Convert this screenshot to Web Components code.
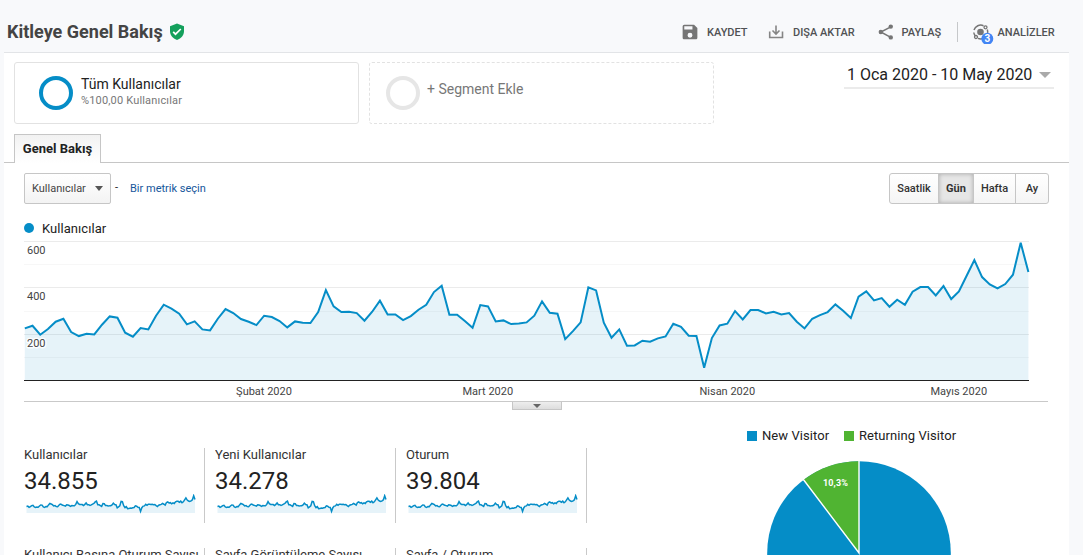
<!DOCTYPE html>
<html lang="tr">
<head>
<meta charset="utf-8">
<title>Kitleye Genel Bakış</title>
<style>
html,body{margin:0;height:100%;overflow:hidden;background:#f8f9fb;font-family:Roboto,"Liberation Sans",sans-serif;color:#222}
</style>
</head>
<body>
<audience-page></audience-page>
<script>
const define = (name, html, init) => customElements.define(name, class extends HTMLElement {
  constructor() {
    super();
    const t = document.createElement('template');
    t.innerHTML = html;
    this.attachShadow({mode: 'open'}).appendChild(t.content.cloneNode(true));
  }
  connectedCallback() { if (init) init(this, this.shadowRoot); }
});

/* Daily users, as height in thirds of a pixel from the top of the plot frame */
const DAYS = [339,331,358,341,319,310,350,362,355,357,328,303,307,352,364,338,342,301,268,280,295,327,318,342,345,310,281,293,311,319,329,
301,305,317,336,318,322,323,290,224,273,290,289,293,316,289,256,297,297,314,302,283,268,230,211,298,298,317,337,269,
273,318,315,326,324,321,301,258,292,295,371,347,321,216,225,322,367,342,391,390,376,379,369,363,325,334,361,362,457,368,330,
325,287,312,284,284,294,289,297,293,319,339,310,299,290,267,286,308,244,228,255,248,274,253,268,229,215,215,240,212,251,
228,181,134,185,207,219,206,178,82,170];

define('tool-action', `<style>
:host{display:flex;align-items:center;height:24px;font-size:11px;font-weight:500;color:#505153;white-space:nowrap}
::slotted(svg){display:block;flex:none}
.t{margin-left:var(--gap,8px)}
</style><slot name="icon"></slot><span class="t"><slot></slot></span>`);

define('page-header', `<style>
:host{display:flex;height:52px;box-sizing:border-box;padding:12px 0 0 7px;position:relative}
h1{margin:0;font-size:18px;line-height:39px;font-weight:700;color:#444;width:155px;white-space:nowrap}
.shield{margin:11px 0 0 8px;display:block}
.tools{display:flex;margin-left:auto;padding-top:8px;width:402px}
tool-action:nth-of-type(1){width:87px;--gap:7px}
tool-action:nth-of-type(2){width:109.500px}
tool-action:nth-of-type(3){width:79.500px;--gap:8px}
.sep{width:1px;height:20px;margin-top:2px;background:#c6c8ca}
tool-action:last-child{margin-left:13.500px;--gap:4px}
</style>
<h1>Kitleye Genel Bakış</h1>
<svg class="shield" width="14" height="18" viewBox="0 0 14 18"><path d="M7 .5 14 3.200V8c0 4.200-2.700 7.500-7 9C2.700 15.500 0 12.200 0 8V3.200z" fill="#14a05c"/><path d="m3.200 8.800 2.300 2.400 5.300-5.200" fill="none" stroke="#fff" stroke-width="1.700"/></svg>
<div class="tools">
<tool-action><svg slot="icon" width="18" height="18" viewBox="1 1 22 22" style="margin-right:1px"><path fill="#757575" d="M17 3H5a2 2 0 0 0-2 2v14c0 1.100.9 2 2 2h14c1.100 0 2-.9 2-2V7l-4-4zm-5 16a3 3 0 1 1 0-6 3 3 0 0 1 0 6zm3-10H5V5h10v4z"/></svg>KAYDET</tool-action>
<tool-action><svg slot="icon" width="16" height="16" viewBox="0 0 16 16" style="margin-right:1px"><path d="M1.700 7.500v6h12.800v-6M8 1.500v8M4.500 6.500 8 10l3.500-3.500" fill="none" stroke="#858585" stroke-width="1.600"/></svg>DIŞA AKTAR</tool-action>
<tool-action><svg slot="icon" width="16" height="16" viewBox="0 0 16 16"><path d="M12.800 2.800 2.800 8l10 5.300" fill="none" stroke="#757575" stroke-width="1.500"/><g fill="#757575"><circle cx="12.800" cy="2.600" r="2.200"/><circle cx="2.800" cy="8" r="2.200"/><circle cx="12.800" cy="13.400" r="2.200"/></g></svg>PAYLAŞ</tool-action>
<div class="sep"></div>
<tool-action><svg slot="icon" width="22" height="24" viewBox="0 0 22 24"><circle cx="8.500" cy="12" r="3.300" fill="#757575"/><path d="M2 10a7 7 0 0 1 9.500-4.300M15.300 9.500a7 7 0 0 1 .3 3.500M1.800 12.500c.2 1.300.6 2.200 1.200 3M6 18.400c1.500.6 2.500.7 4 .4" fill="none" stroke="#757575" stroke-width="1.500"/><circle cx="13.500" cy="7.300" r="1.500" fill="#f8f9fb" stroke="#757575" stroke-width="1.300"/><circle cx="4" cy="17" r="1.500" fill="#f8f9fb" stroke="#757575" stroke-width="1.300"/><circle cx="15.300" cy="18.800" r="6" fill="#4285f4"/><text x="15.300" y="22.300" font-size="10" font-weight="700" fill="#fff" text-anchor="middle">3</text></svg>ANALİZLER</tool-action>
</div>`);

define('segment-card', `<style>
:host{display:flex;box-sizing:border-box;width:345px;height:62px;border:1px solid #e2e2e2;border-radius:3px;padding:13px 0 0 24px}
:host([empty]){border-style:dashed;padding-left:16px}
.ring{box-sizing:border-box;width:34px;height:34px;border:5px solid #058dc7;border-radius:50%;flex:none;border-width:4.500px}
:host([empty]) .ring{border-color:#e6e6e6}
.txt{margin-left:8px;white-space:nowrap}
.n{font-size:14px;line-height:17px}
.s{font-size:11px;line-height:15px;color:#777;letter-spacing:.17px}
:host([empty]) .txt{margin-left:7px}
:host([empty]) .n{margin-top:5px;color:#777}
</style><div class="ring"></div><div class="txt"><div class="n"><slot></slot></div><div class="s"><slot name="sub"></slot></div></div>`);

define('date-range', `<style>
:host{display:flex;box-sizing:border-box;width:210px;height:27px;border-bottom:2px solid #ebebeb;padding:0 3px 0 3px;justify-content:space-between;font-size:16px;line-height:26px;color:#222;white-space:nowrap}
i{margin-top:10px;width:0;height:0;border:6px solid transparent;border-top-color:#aaa;border-bottom:0}
</style><span><slot></slot></span><i></i>`);

define('tab-strip', `<style>
:host{display:flex;height:28px;padding-left:10px;border-bottom:1px solid #c6c6c6}
div{box-sizing:border-box;width:87px;height:29px;border:1px solid #c6c6c6;border-bottom:0;background:linear-gradient(#f2f2f2,#fff);text-align:center;font-size:13px;font-weight:700;line-height:28px}
</style><div><slot></slot></div>`);

define('metric-bar', `<style>
:host{display:flex;height:31px;font-size:11px}
.sel{box-sizing:border-box;width:87px;height:31px;border:1px solid #c6c6c6;border-radius:2px;background:linear-gradient(#fff,#f3f3f3);display:flex;justify-content:space-between;padding:0 7px;line-height:29px;color:#444}
i{margin-top:12px;width:0;height:0;border:4px solid transparent;border-top:5px solid #555;border-bottom:0}
.dash{width:19px;padding-left:4px;box-sizing:border-box;line-height:30px}
.link{line-height:31px;color:#15569b}
.group{margin-left:auto;display:flex;box-sizing:border-box;height:31px;border:1px solid #c6c6c6;border-radius:3px;background:linear-gradient(#fff,#f5f5f5);font-weight:500;line-height:29px;text-align:center;color:#333}
.group span{box-sizing:border-box;border-left:1px solid #c6c6c6}
.group span:first-child{border:0;width:48px}
.group .on{width:35px;background:#e6e6e6;box-shadow:inset 0 0 4px #aaa;font-weight:700}
.group span:nth-child(3){width:42px}.group span:last-child{width:33px}
</style><div class="sel"><span>Kullanıcılar</span><i></i></div><span class="dash">-</span><span class="link">Bir metrik seçin</span>
<div class="group"><span>Saatlik</span><span class="on">Gün</span><span>Hafta</span><span>Ay</span></div>`);

define('users-chart', `<style>
:host{display:block}
.legend{display:flex;align-items:center;height:16px;font-size:13px;line-height:17px;letter-spacing:.05px;color:#222}
.legend i{width:10px;height:10px;border-radius:50%;background:#058dc7;margin-right:8px}
svg{display:block;overflow:visible}
text{font-size:11px;fill:#444}
.foot{height:9px;border-top:1px solid #c9c9c9;display:flex;justify-content:center;box-sizing:border-box;padding-left:2px}
.grip{box-sizing:border-box;width:50px;height:8px;border:1px solid #c6c6c6;border-top:0;background:linear-gradient(#eee,#ddd);display:flex;justify-content:center}
.grip i{width:0;height:0;margin-top:2px;border:4px solid transparent;border-top-color:#666;border-bottom:0}
</style><div class="legend"><i></i>Kullanıcılar</div>
<svg width="1024" height="165" viewBox="24 236 1024 165">
<g id="grid" shape-rendering="crispEdges"></g>
<path id="area" fill="#058dc7" fill-opacity=".1"/><path id="line" fill="none" stroke="#058dc7" stroke-width="2" stroke-linejoin="miter"/>
<rect x="24" y="380" width="1005" height="1" fill="#222"/>
<g stroke="#fff" stroke-opacity=".85" stroke-width="3" stroke-linejoin="round" paint-order="stroke"><text x="27" y="254">600</text><text x="27" y="300">400</text><text x="27" y="347">200</text></g>
<g text-anchor="middle"><text x="264" y="395">Şubat 2020</text><text x="487.800" y="395">Mart 2020</text><text x="727.300" y="395">Nisan 2020</text><text x="958.800" y="395">Mayıs 2020</text></g>
</svg>
<div class="foot"><div class="grip"><i></i></div></div>`, (el, r) => {
  r.getElementById('grid').innerHTML = [241,264,287,311,334,357].map((y, i) => `<rect x="24" y="${y}" width="1005" height="1" fill="${i % 2 ? '#f7f7f7' : '#ebebeb'}"/>`).join('');
  const pts = DAYS.map((v, i) => `${(24.8 + i * 7.72).toFixed(2)},${(215.4 + v / 3).toFixed(2)}`).join(' L');
  r.getElementById('line').setAttribute('d', 'M' + pts);
  r.getElementById('area').setAttribute('d', `M24.800,380 L${pts} L1028.400,380Z`);
});

define('metric-card', `<style>
:host{display:block;box-sizing:border-box;width:181px;height:75px;border-right:1px solid #c9c9c9;white-space:nowrap}
.l{font-size:13px;line-height:14px;overflow:hidden;letter-spacing:-.02px;color:#333}
.v{font-size:24px;line-height:28px;margin-top:5px}
svg{display:block;margin-top:-1px}
</style><div class="l"><slot></slot></div><div class="v"><slot name="value"></slot></div>
<svg width="172" height="20" viewBox="0 0 172 20"><path class="a" fill="#058dc7" fill-opacity=".1"/><path class="p" fill="none" stroke="#058dc7" stroke-width="1.500"/></svg>`, (el, r) => {
  const pts = DAYS.map((v, i) => `${(2.5 + i * 1.296).toFixed(2)},${(19 - (496 - v) / 3 * .125).toFixed(2)}`).join(' L');
  r.querySelector('.p').setAttribute('d', 'M' + pts);
  r.querySelector('.a').setAttribute('d', `M2.500,19 L${pts} L171,19Z`);
  if (!el.querySelector('[slot=value]')) r.querySelector('svg').remove();
});

define('visitor-pie', `<style>
:host{display:block}
.legend{display:flex;font-size:13px;line-height:16px;color:#222;letter-spacing:.07px;white-space:nowrap}
.legend span{display:flex;align-items:center;width:97px;flex:none}
i{width:10px;height:10px;margin-right:5px;background:#058dc7;flex:none}
.g{background:#50b432}
svg{display:block;margin:16px 0 0 20px}
</style><div class="legend"><span><i></i>New Visitor</span><span><i class="g"></i>Returning Visitor</span></div>
<svg width="186" height="186" viewBox="0 0 186 186"><circle cx="92" cy="93" r="91.800" fill="#058dc7"/><path d="M92 93V1.200A91.800 91.800 0 0 0 36.600 19.800Z" fill="#50b432"/><path d="M92 .5V93L36 19" fill="none" stroke="#fff" stroke-width="1.400"/><text x="68.500" y="26" font-size="9" font-weight="700" fill="#fff" text-anchor="middle" letter-spacing=".1">10,3%</text></svg>`);

define('audience-page', `<style>
:host{display:block;height:100vh;overflow:hidden}
main{width:1065px;height:700px;box-sizing:border-box;margin-left:4px;background:#fff;border-top:1px solid #e2e4e7}
.segs{display:flex;padding:9px 15px 0 10px;gap:10px;height:81px;box-sizing:border-box}
date-range{margin-left:auto}
metric-bar{margin:10px 20px 0 20px}
users-chart{margin:16px 21px 0 20px}
.low{display:flex;align-items:flex-start;margin:34px 0 0 20px}
.grid{display:grid;grid-template-columns:repeat(3,181px);column-gap:10px;row-gap:25px;padding-top:4px}
visitor-pie{margin-left:160px;margin-top:-16px}
</style><page-header></page-header>
<main><div class="segs"><segment-card>Tüm Kullanıcılar<span slot="sub">%100,00 Kullanıcılar</span></segment-card><segment-card empty>+ Segment Ekle</segment-card><date-range>1 Oca 2020 - 10 May 2020</date-range></div>
<tab-strip>Genel Bakış</tab-strip><metric-bar></metric-bar><users-chart></users-chart>
<div class="low"><div class="grid">
<metric-card>Kullanıcılar<span slot="value">34.855</span></metric-card>
<metric-card>Yeni Kullanıcılar<span slot="value">34.278</span></metric-card>
<metric-card>Oturum<span slot="value">39.804</span></metric-card>
<metric-card>Kullanıcı Başına Oturum Sayısı</metric-card>
<metric-card>Sayfa Görüntüleme Sayısı</metric-card>
<metric-card>Sayfa / Oturum</metric-card>
</div><visitor-pie></visitor-pie></div></main>`);
</script>
</body>
</html>
